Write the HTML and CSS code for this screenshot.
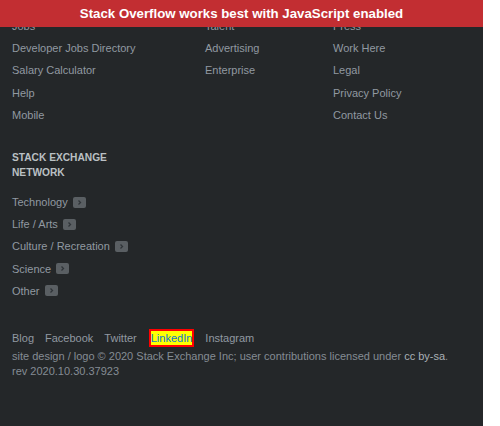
FILE: index.html
```html
<!DOCTYPE html>
<html>
<head>
<meta charset="utf-8">
<link rel="stylesheet" href="styles.css">
</head>
<body>
<div class="page">
  <div class="noscript">Stack Overflow works best with JavaScript enabled</div>
  <footer class="footer">
    <div class="cols">
      <ul class="col">
        <li><a>Jobs</a></li>
        <li><a>Developer Jobs Directory</a></li>
        <li><a>Salary Calculator</a></li>
        <li><a>Help</a></li>
        <li><a>Mobile</a></li>
      </ul>
      <ul class="col">
        <li><a>Talent</a></li>
        <li><a>Advertising</a></li>
        <li><a>Enterprise</a></li>
      </ul>
      <ul class="col">
        <li><a>Press</a></li>
        <li><a>Work Here</a></li>
        <li><a>Legal</a></li>
        <li><a>Privacy Policy</a></li>
        <li><a>Contact Us</a></li>
      </ul>
    </div>
    <h5 class="heading">Stack Exchange<br>Network</h5>
    <ul class="network">
      <li><a>Technology</a><span class="chev"><svg width="13" height="11" viewBox="0 0 13 11"><path d="M5.5 3.5 L7.5 5.5 L5.5 7.5" fill="none" stroke="#2f3438" stroke-width="1.3"/></svg></span></li>
      <li><a>Life / Arts</a><span class="chev"><svg width="13" height="11" viewBox="0 0 13 11"><path d="M5.5 3.5 L7.5 5.5 L5.5 7.5" fill="none" stroke="#2f3438" stroke-width="1.3"/></svg></span></li>
      <li><a>Culture / Recreation</a><span class="chev"><svg width="13" height="11" viewBox="0 0 13 11"><path d="M5.5 3.5 L7.5 5.5 L5.5 7.5" fill="none" stroke="#2f3438" stroke-width="1.3"/></svg></span></li>
      <li><a>Science</a><span class="chev"><svg width="13" height="11" viewBox="0 0 13 11"><path d="M5.5 3.5 L7.5 5.5 L5.5 7.5" fill="none" stroke="#2f3438" stroke-width="1.3"/></svg></span></li>
      <li><a>Other</a><span class="chev"><svg width="13" height="11" viewBox="0 0 13 11"><path d="M5.5 3.5 L7.5 5.5 L5.5 7.5" fill="none" stroke="#2f3438" stroke-width="1.3"/></svg></span></li>
    </ul>
    <div class="social">
      <a>Blog</a>
      <a>Facebook</a>
      <a>Twitter</a>
      <a class="focus">LinkedIn</a>
      <a>Instagram</a>
    </div>
    <p class="copy">site design / logo © 2020 Stack Exchange Inc; user contributions licensed under <a class="lic">cc by-sa</a>.<br>rev 2020.10.30.37923</p>
  </footer>
</div>
</body>
</html>
```

FILE: styles.css
```css
html, body {
  margin: 0;
  padding: 0;
  background: #ffffff;
}
body {
  font-family: "Liberation Sans", Arial, sans-serif;
  font-size: 11px;
}
.page {
  position: relative;
  width: 483px;
  height: 426px;
  background: #242729;
  overflow: hidden;
}
.noscript {
  position: absolute;
  top: 0;
  left: 0;
  width: 483px;
  height: 27px;
  background: #c22e32;
  color: #ffffff;
  font-weight: bold;
  font-size: 13.25px;
  line-height: 27px;
  text-align: center;
}
.footer {
  padding: 15px 0 0 12px;
  color: #9199a1;
}
a {
  color: #9199a1;
}
ul {
  list-style: none;
  margin: 0;
  padding: 0;
}
.cols {
  display: grid;
  grid-template-columns: 193px 128px 1fr;
}
.col li, .network li {
  padding: 4px 0;
  line-height: 14.2px;
}
.network li {
  display: flex;
  align-items: center;
}
.heading {
  margin: 24px 0 11px;
  font-size: 10.2px;
  font-weight: bold;
  text-transform: uppercase;
  line-height: 15px;
  color: #bbc0c4;
}
.chev {
  display: inline-block;
  width: 13px;
  height: 11px;
  margin-left: 5px;
  background: #5a5f63;
  border-radius: 2px;
}
.chev svg {
  display: block;
}
.social {
  display: flex;
  align-items: center;
  gap: 11px;
  margin-top: 27px;
  line-height: 14px;
}
.focus {
  color: #0a77cc;
  background: #ffff00;
  border: 2px solid #ff0000;
  margin: 0 0 0 1px;
  padding: 0;
}
.copy {
  margin: 2px 0 0;
  line-height: 15px;
  color: #848c94;
}
.lic {
  color: #aab0b5;
}
```
